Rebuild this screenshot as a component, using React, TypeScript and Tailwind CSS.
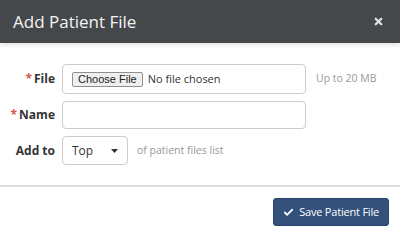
import { Check, X } from "lucide-react";

const font = { fontFamily: '"Open Sans", "Noto Sans", sans-serif' };

function Label({ text, required }: { text: string; required?: boolean }) {
  return (
    <label className="w-[55px] shrink-0 text-right text-[12px] font-bold text-[#333]">
      {required && <span className="mr-[2px] text-[#d9534f]">*</span>}
      {text}
    </label>
  );
}

export default function App() {
  return (
    <div className="w-[400px] h-[234px] bg-white overflow-hidden" style={font}>
      <header className="relative h-[43px] bg-[#45484b] flex items-center pl-[13px] pr-[16px] shadow-[0_2px_5px_rgba(0,0,0,0.12)]">
        <h1 className="text-[17px] leading-none text-[#f4f4f4]">Add Patient File</h1>
        <X className="ml-auto w-[11px] h-[11px] text-[#e2e2e2]" strokeWidth={5} />
      </header>

      <form className="pt-[21px] flex flex-col gap-[7px]">
        <div className="flex items-center gap-[7px]">
          <Label text="File" required />
          <div className="w-[244px] h-[30px] border border-[#ccc] rounded-[4px] flex items-center pl-[9px]">
            <span
              className="h-[15px] px-[5px] flex items-center bg-[#efefef] border border-[#8f8f8f] rounded-[2px] text-[11px] text-[#222]"
              style={{ fontFamily: '"Liberation Sans", Arial, sans-serif' }}
            >
              Choose File
            </span>
            <span className="ml-[5px] text-[11px] text-[#333]">No file chosen</span>
          </div>
          <span className="ml-[3px] text-[10.5px] text-[#999]">Up to 20 MB</span>
        </div>

        <div className="flex items-center gap-[7px]">
          <Label text="Name" required />
          <div className="w-[244px] h-[28px] border border-[#ccc] rounded-[4px]" />
        </div>

        <div className="flex items-center gap-[7px]">
          <Label text="Add to" />
          <div className="w-[66px] h-[29px] border border-[#ccc] rounded-[4px] flex items-center pl-[9px] pr-[9px]">
            <span className="text-[12px] text-[#333]">Top</span>
            <svg className="ml-auto" width="7" height="4" viewBox="0 0 7 4">
              <path d="M0 0h7L3.5 4z" fill="#333" />
            </svg>
          </div>
          <span className="ml-[2px] text-[10.5px] text-[#999]">of patient files list</span>
        </div>
      </form>

      <div className="mt-[20px] border-t-2 border-[#dcdcdc] flex justify-end pt-[11px] pr-[11px]">
        <button className="h-[28px] px-[9px] flex items-center gap-[5px] bg-[#33517b] border border-[#2a4467] rounded-[3px] text-[11px] tracking-[-0.2px] text-white">
          <Check className="w-[11px] h-[11px]" strokeWidth={4} />
          Save Patient File
        </button>
      </div>
    </div>
  );
}
